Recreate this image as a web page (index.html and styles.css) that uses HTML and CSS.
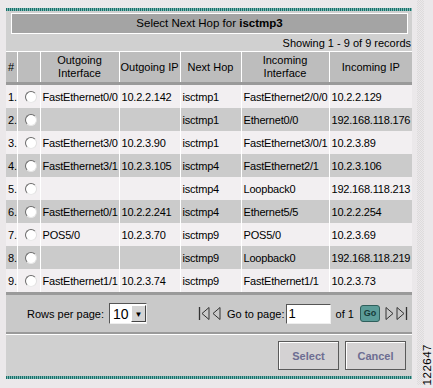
FILE: index.html
```html
<!DOCTYPE html>
<html lang="en">
<head>
  <meta charset="UTF-8">
  <title>Select Next Hop</title>
  <link rel="stylesheet" href="styles.css">
</head>
<body>

<div class="panel">
  <div class="stripe"></div>
  <div class="title">Select Next Hop for <b>isctmp3</b></div>
  <div class="showing">Showing 1 - 9 of 9 records</div>

  <table class="hops">
    <colgroup>
      <col class="c-num"><col class="c-radio"><col class="c-oi"><col class="c-oip">
      <col class="c-nh"><col class="c-ii"><col class="c-iip">
    </colgroup>
    <thead>
      <tr>
        <th class="num">#</th>
        <th></th>
        <th>Outgoing<br>Interface</th>
        <th>Outgoing IP</th>
        <th>Next Hop</th>
        <th>Incoming<br>Interface</th>
        <th>Incoming IP</th>
      </tr>
    </thead>
    <tbody>
      <tr><td>1.</td><td><span class="radio"></span></td><td>FastEthernet0/0</td><td>10.2.2.142</td><td>isctmp1</td><td>FastEthernet2/0/0</td><td>10.2.2.129</td></tr>
      <tr><td>2.</td><td><span class="radio"></span></td><td></td><td></td><td>isctmp1</td><td>Ethernet0/0</td><td>192.168.118.176</td></tr>
      <tr><td>3.</td><td><span class="radio"></span></td><td>FastEthernet3/0</td><td>10.2.3.90</td><td>isctmp1</td><td>FastEthernet3/0/1</td><td>10.2.3.89</td></tr>
      <tr><td>4.</td><td><span class="radio"></span></td><td>FastEthernet3/1</td><td>10.2.3.105</td><td>isctmp4</td><td>FastEthernet2/1</td><td>10.2.3.106</td></tr>
      <tr><td>5.</td><td><span class="radio"></span></td><td></td><td></td><td>isctmp4</td><td>Loopback0</td><td>192.168.118.213</td></tr>
      <tr><td>6.</td><td><span class="radio"></span></td><td>FastEthernet0/1</td><td>10.2.2.241</td><td>isctmp4</td><td>Ethernet5/5</td><td>10.2.2.254</td></tr>
      <tr><td>7.</td><td><span class="radio"></span></td><td>POS5/0</td><td>10.2.3.70</td><td>isctmp9</td><td>POS5/0</td><td>10.2.3.69</td></tr>
      <tr><td>8.</td><td><span class="radio"></span></td><td></td><td></td><td>isctmp9</td><td>Loopback0</td><td>192.168.118.219</td></tr>
      <tr><td>9.</td><td><span class="radio"></span></td><td>FastEthernet1/1</td><td>10.2.3.74</td><td>isctmp9</td><td>FastEthernet1/1</td><td>10.2.3.73</td></tr>
    </tbody>
  </table>

  <div class="pager">
    <span class="label">Rows per page:</span>
    <span class="select"><span class="select-val">10</span><span class="select-btn">&#9660;</span></span>
    <span class="nav">
      <svg width="12" height="17" viewBox="0 0 12 17"><path d="M1.5 2v13" stroke="#333" stroke-width="1.3"/><path d="M11 2.5L4 8.5L11 14.5Z" fill="none" stroke="#333"/></svg>
      <svg width="10" height="17" viewBox="0 0 10 17"><path d="M9 2.5L2 8.5L9 14.5Z" fill="none" stroke="#333"/></svg>
      <span class="goto">Go to page:</span>
      <span class="page-input">1</span>
      <span class="of">of 1</span>
      <span class="go">Go</span>
      <svg width="10" height="17" viewBox="0 0 10 17"><path d="M1 2.5L8 8.5L1 14.5Z" fill="none" stroke="#333"/></svg>
      <svg width="12" height="17" viewBox="0 0 12 17"><path d="M1 2.5L8 8.5L1 14.5Z" fill="none" stroke="#333"/><path d="M10.5 2v13" stroke="#333" stroke-width="1.3"/></svg>
    </span>
  </div>

  <div class="actions">
    <button class="btn">Select</button>
    <button class="btn">Cancel</button>
  </div>
  <div class="stripe"></div>
</div>

<div class="side">
  <div class="dots"></div>
  <span class="fig">122647</span>
</div>

</body>
</html>
```

FILE: styles.css
```css
body {
  margin: 0;
  background-color: #ebe8ea;
  font-family: "Liberation Sans", Arial, sans-serif;
  font-size: 11px;
  letter-spacing: -0.2px;
  color: #000;
  display: flex;
  width: 433px;
  height: 388px;
}
.panel {
  width: 406px;
  flex-shrink: 0;
  margin: 8px 0 0 6px;
  height: 371px;
  background-color: #d0d0d0;
  display: flex;
  flex-direction: column;
}
.stripe {
  height: 3px;
  flex-shrink: 0;
  background: repeating-linear-gradient(90deg, #1d6e69 0 1px, #79b9b4 1px 2px);
}
.title {
  margin: 2px 4px 0 5px;
  height: 19px;
  line-height: 19px;
  border: 1px solid #fff;
  background-color: #a4a4a4;
  text-align: center;
  font-size: 11.5px;
  letter-spacing: 0;
}
.showing {
  height: 17px;
  line-height: 19px;
  text-align: right;
  padding-right: 1px;
  border-bottom: 1px solid #fff;
  letter-spacing: 0;
}
.hops {
  width: 406px;
  border-collapse: collapse;
  table-layout: fixed;
}
.c-num { width: 11px; }
.c-radio { width: 23px; }
.c-oi { width: 79px; }
.c-oip { width: 61px; }
.c-nh { width: 61px; }
.c-ii { width: 88px; }
.c-iip { width: 83px; }
.hops th {
  height: 30px;
  background-color: #bdbdbd;
  font-weight: normal;
  line-height: 13px;
  text-align: center;
  border-left: 1px solid #fff;
  border-bottom: 3px solid #9a9a9a;
  padding: 0;
  letter-spacing: 0;
}
.hops th:first-child {
  border-left: none;
}
.hops th.num {
  text-align: left;
  padding-left: 2px;
}
.hops td {
  height: 23px;
  padding: 0 0 0 2px;
  border-left: 1px solid #fff;
  white-space: nowrap;
  overflow: hidden;
}
.hops td:first-child {
  border-left: none;
}
.hops tbody tr:nth-child(odd) td {
  background-color: #f2eff1;
}
.hops tbody tr:nth-child(even) td {
  background-color: #cbcbcb;
}
.hops tbody tr:last-child td {
  border-bottom: 3px solid #9a9a9a;
}
.radio {
  display: block;
  width: 10px;
  height: 10px;
  margin-left: 5px;
  border-radius: 50%;
  background-color: #fff;
  border: 1px solid;
  border-color: #6a6a6a #e0e0e0 #e8e8e8 #6a6a6a;
}
.pager {
  height: 37px;
  flex-shrink: 0;
  display: flex;
  align-items: center;
  padding-left: 21px;
  background-color: #c9c9c9;
  border-bottom: 2px solid #9a9a9a;
  letter-spacing: 0;
}
.label {
  margin-right: 5px;
}
.select {
  display: flex;
  width: 36px;
  height: 19px;
  background-color: #fff;
  border: 1px solid;
  border-color: #555 #eee #eee #555;
  align-items: center;
}
.select-val {
  flex: 1;
  font-size: 14px;
  padding-left: 3px;
}
.select-btn {
  width: 15px;
  height: 17px;
  font-size: 8px;
  line-height: 17px;
  text-align: center;
  background-color: #d4d4d4;
  border: 1px solid;
  border-color: #fff #444 #444 #fff;
  box-sizing: border-box;
}
.nav {
  margin-left: 51px;
  display: flex;
  align-items: center;
  gap: 1px;
}
.goto {
  margin-left: 5px;
}
.page-input {
  width: 41px;
  height: 18px;
  line-height: 18px;
  font-size: 13px;
  padding-left: 2px;
  background-color: #fff;
  border: 1px solid;
  border-color: #555 #eee #eee #555;
}
.of {
  margin-left: 4px;
}
.go {
  margin: 0 4px 0 5px;
  width: 18px;
  height: 15px;
  line-height: 15px;
  border-radius: 3px;
  background-color: #5b9c98;
  border: 1px solid #2f5f5c;
  font-size: 9px;
  font-weight: bold;
  text-align: center;
  color: #173b39;
}
.actions {
  border-top: 1px solid #fff;
  flex: 1;
  display: flex;
  justify-content: flex-end;
  align-items: center;
  gap: 6px;
  padding-right: 6px;
}
.btn {
  width: 61px;
  height: 29px;
  font-family: "Liberation Sans", Arial, sans-serif;
  font-size: 11px;
  font-weight: bold;
  color: #6d6d92;
  background-color: #d4d2d3;
  border: 1px solid #5a5a5a;
  box-shadow: inset 1px 1px 0 #fff;
  padding: 0;
}
.side {
  flex: 1;
  display: flex;
  align-items: flex-end;
  padding: 0 0 3px 5px;
  overflow: hidden;
}
.dots {
  width: 7px;
  height: 100%;
  flex-shrink: 0;
  background: repeating-conic-gradient(#dddbdc 0 25%, transparent 0 50%) 0 0 / 2px 2px;
}
.fig {
  writing-mode: vertical-rl;
  transform: rotate(180deg);
  font-size: 11.5px;
  letter-spacing: 0.5px;
  line-height: 12px;
  margin-left: -3px;
}
```
